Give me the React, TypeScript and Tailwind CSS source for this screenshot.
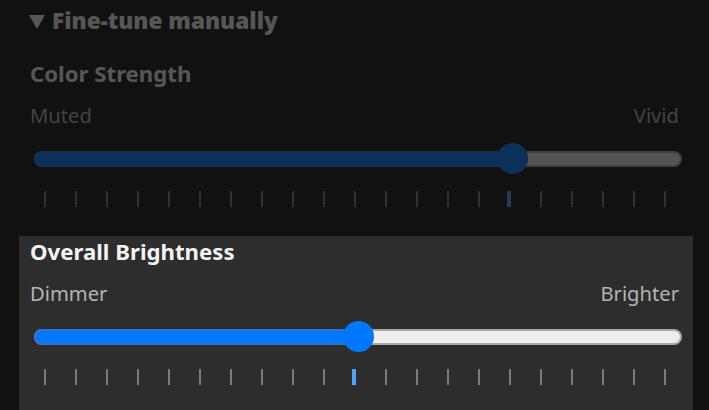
import React from "react";

const FONT = { fontFamily: '"Noto Sans", "Open Sans", sans-serif' };

function Slider({ frac }: { frac: number }) {
  const trackW = 648;
  const thumb = 31;
  const center = 15 + frac * (trackW - 30);
  return (
    <div className="relative h-[31px] w-[648px]">
      <div className="absolute left-0 top-[7.5px] h-[16px] w-[648px] rounded-full border-2 border-[#a8a8a8] bg-[#eeeeee]" />
      <div
        className="absolute left-0 top-[7.5px] h-[16px] rounded-l-full border-2 border-r-0 border-[#2f74d0] bg-[#0077ff]"
        style={{ width: center }}
      />
      <div
        className="absolute top-0 h-[31px] w-[31px] rounded-full bg-[#0077ff]"
        style={{ left: center - thumb / 2 }}
      />
    </div>
  );
}

function Ticks({ active }: { active: number }) {
  return (
    <div className="flex h-[16px] gap-[29px] pl-[14px]">
      {Array.from({ length: 21 }).map((_, i) =>
        i === active ? (
          <div key={i} className="-ml-[2px] h-[16px] w-[4px] shrink-0 bg-[#4da3ff]" />
        ) : (
          <div key={i} className="h-[16px] w-[2px] shrink-0 bg-[#7a7a7a]" />
        )
      )}
    </div>
  );
}

function Card({
  title,
  left,
  right,
  frac,
  active,
  panel,
}: {
  title: string;
  left: string;
  right: string;
  frac: number;
  active: number;
  panel?: boolean;
}) {
  return (
    <div className={`px-[11px] ${panel ? "bg-[#2d2d2d] pb-[40px]" : "pb-[16px]"}`}>
      <div className="h-[32px] text-[22.2px] font-bold leading-[32px] text-[#f4f4f4]">{title}</div>
      <div className="mt-[11px] flex h-[28px] items-center justify-between pr-[3px] text-[20.2px] leading-[28px] text-[#b4b4b4]">
        <span>{left}</span>
        <span>{right}</span>
      </div>
      <div className="mt-[14px] pl-[4px]">
        <Slider frac={frac} />
      </div>
      <div className="mt-[17px]">
        <Ticks active={active} />
      </div>
    </div>
  );
}

export default function App() {
  return (
    <div className="h-[410px] w-[709px] overflow-hidden bg-[#111111]" style={FONT}>
      <div className="pl-[19px] pr-[16px]">
        <div className="opacity-30">
          <div className="flex h-[42px] items-center gap-[7px] pl-[10px]">
            <svg width="16" height="14" viewBox="0 0 16 14" className="mt-[1px]">
              <polygon points="0,0 16,0 8,14" fill="#f4f4f4" />
            </svg>
            <span className="text-[22.6px] font-black leading-[42px] text-[#f4f4f4]">Fine-tune manually</span>
          </div>
          <div className="mt-[16px]">
            <Card title="Color Strength" left="Muted" right="Vivid" frac={0.75} active={15} />
          </div>
        </div>
        <div className="mt-[13px]">
          <Card title="Overall Brightness" left="Dimmer" right="Brighter" frac={0.5} active={10} panel />
        </div>
      </div>
    </div>
  );
}
